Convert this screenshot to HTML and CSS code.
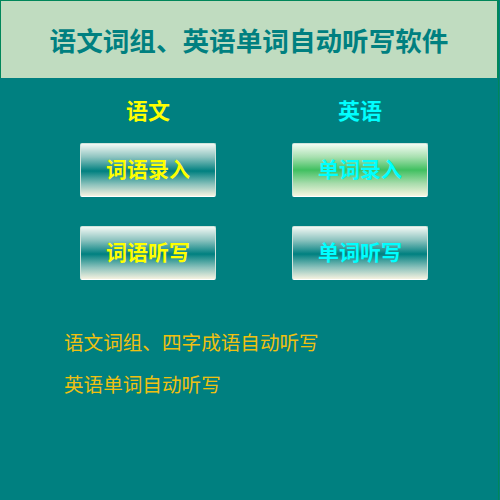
FILE: index.html
```html
<!DOCTYPE html>
<html lang="zh-CN">
<head>
<meta charset="utf-8">
<title>语文词组、英语单词自动听写软件</title>
<link rel="stylesheet" href="styles.css">
</head>
<body>
<div class="app">
  <header class="header">
    <h1 class="title">语文词组、英语单词自动听写软件</h1>
  </header>
  <main class="columns">
    <section class="column">
      <div class="label label-cn">语文</div>
      <button class="btn btn-teal text-yellow">词语录入</button>
      <button class="btn btn-teal text-yellow">词语听写</button>
    </section>
    <section class="column">
      <div class="label label-en">英语</div>
      <button class="btn btn-green text-cyan">单词录入</button>
      <button class="btn btn-teal text-cyan">单词听写</button>
    </section>
  </main>
  <div class="notes">
    <p class="note">语文词组、四字成语自动听写</p>
    <p class="note">英语单词自动听写</p>
  </div>
</div>
</body>
</html>
```
FILE: styles.css
```css
html, body {
  margin: 0;
  padding: 0;
  background: #008080;
}
body {
  width: 500px;
  height: 500px;
  overflow: hidden;
  font-family: "Noto Sans CJK SC", "Noto Sans", sans-serif;
}
.app {
  width: 498px;
  height: 500px;
  border-right: 1px solid #00875a;
  box-sizing: content-box;
}
.header {
  height: 77px;
  background: #c0dcc0;
  border: 1px solid #00875a;
  border-bottom: none;
  display: flex;
  align-items: center;
  justify-content: center;
}
.title {
  margin: 0;
  font-size: 26.6px;
  font-weight: bold;
  color: #008080;
  letter-spacing: 0;
  line-height: 1;
  padding-top: 1px;
}
.columns {
  display: flex;
  gap: 76px;
  padding-left: 80px;
  padding-top: 19px;
}
.column {
  width: 136px;
  display: flex;
  flex-direction: column;
  align-items: center;
}
.label {
  font-size: 22px;
  font-weight: bold;
  line-height: 24px;
  height: 24px;
  margin-bottom: 22px;
}
.label-cn { color: #ffff00; }
.label-en { color: #00ffff; }
.btn {
  width: 136px;
  height: 54px;
  box-sizing: border-box;
  border: 1px solid #d0e4dc;
  border-bottom-color: #ffffff;
  border-radius: 2px;
  font-family: "Noto Sans CJK SC", "Noto Sans", sans-serif;
  font-size: 21px;
  font-weight: bold;
  padding: 0 0 4px 0;
  margin-bottom: 29px;
  cursor: pointer;
}
.btn-teal {
  background: linear-gradient(to bottom, #f2f8f4 0%, #8ec4c0 25%, #008080 52%, #8cc2bc 78%, #f6f2e0 100%);
}
.btn-green {
  background: linear-gradient(to bottom, #f2fcf2 0%, #a8e0b0 25%, #40c060 50%, #a8dcac 76%, #f6f6e0 100%);
}
.text-yellow { color: #ffff00; }
.text-cyan { color: #00ffff; }
.notes {
  padding-left: 64px;
  margin-top: 12px;
}
.note {
  margin: 0;
  font-size: 19.6px;
  line-height: 42px;
  color: #f0c010;
}
```
